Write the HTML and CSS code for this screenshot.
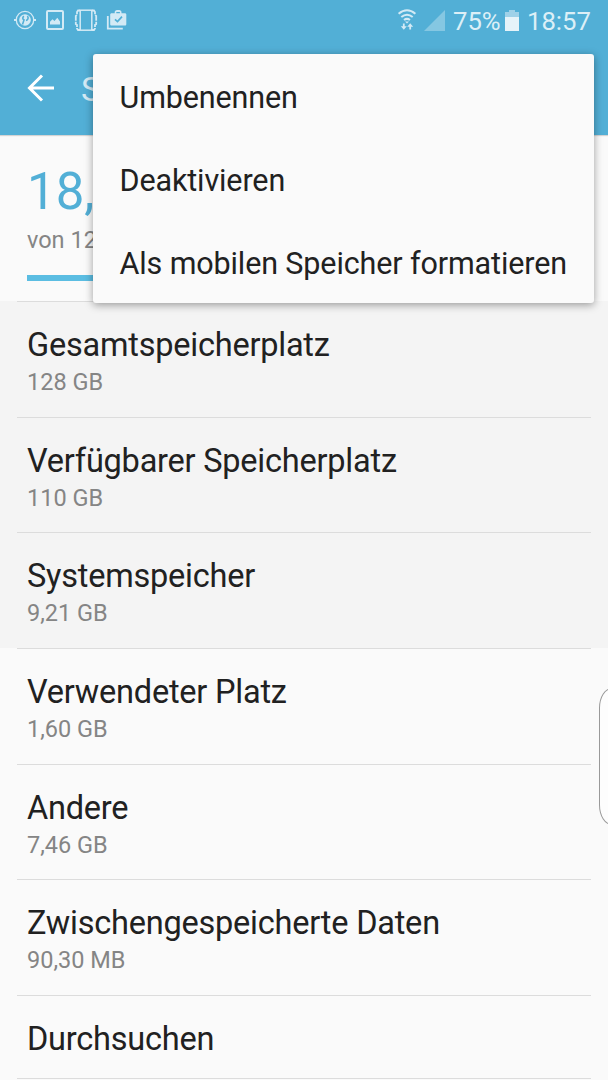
FILE: index.html
```
<!DOCTYPE html>
<html lang="de">
<head>
    <meta charset="UTF-8">
    <meta name="viewport" content="width=device-width, initial-scale=1.0">
    <title>Speicher</title>
    <link rel="stylesheet" href="styles.css">
</head>
<body>
<div class="screen">
    <header class="top">
        <div class="statusbar">
            <div class="status-left">
                <svg class="icon" width="24" height="24" viewBox="0 0 24 24" fill="none" stroke="currentColor">
                    <circle cx="12" cy="12" r="8.700" stroke-width="1.300"/>
                    <path d="M1 12h3M20 12h3" stroke-width="2.200"/>
                    <circle cx="12" cy="12" r="5.800" fill="currentColor" stroke="none"/>
                    <path d="M9.500 16.500l1.500-4.500c-1.800-1-1.500-3 0-3.800M14.300 8.200c1.700 1.600.6 4-1.300 4.300" stroke="#52afd6" stroke-width="1.600"/>
                </svg>
                <svg class="icon" width="20" height="22" viewBox="0 0 20 22">
                    <rect x="2" y="2" width="16" height="18" rx="1" fill="none" stroke="currentColor" stroke-width="2"/>
                    <path d="M5 15.500v-2.700l2.500-2.600 2 1.800 2.800-3.300 2.700 3.800v3z" fill="currentColor"/>
                </svg>
                <svg class="icon" width="24" height="24" viewBox="0 0 24 24" fill="none" stroke="currentColor">
                    <rect x="6.200" y="2.200" width="11.600" height="20" stroke-width="1.500"/>
                    <path d="M6 2.500H4L3 4v3L1.800 8v8L3 17v3.500l1 1.500h2M18 2.500h2L21 4v3l1.200 1v8L21 17v3.500L20 22h-2" stroke-width="1.800" stroke-dasharray="6 1"/>
                </svg>
                <svg class="icon" width="22" height="22" viewBox="0 0 22 22">
                    <path d="M1.800 7v12.700h15" fill="none" stroke="currentColor" stroke-width="1.800"/>
                    <path fill="currentColor" fill-rule="evenodd" d="M5.700 4.200h3v-.8c0-1.400 1-2.300 2.300-2.300h2.200c1.300 0 2.300.9 2.300 2.300v.8h3.300c1 0 1.500.5 1.500 1.500v9.200c0 1-.5 1.500-1.500 1.500H5.700c-1 0-1.500-.5-1.500-1.500V5.700c0-1 .5-1.500 1.500-1.500zM10.300 4.200h3.600V3h-3.600z"/>
                    <path d="M9 10.300l2.500 2.300 4.500-5" fill="none" stroke="#52afd6" stroke-width="1.700"/>
                </svg>
            </div>
            <div class="status-right">
                <svg class="icon wifi" width="20" height="24" viewBox="0 0 20 24" fill="none" stroke="currentColor" stroke-width="2">
                    <path d="M1.600 5.800q8.400-7 16.800 0M4.300 9q5.700-4.600 11.400 0M7 12q3-2.300 6 0"/>
                    <path d="M8 13.500h4l-2 2z" fill="currentColor" stroke="none"/>
                    <path d="M6.800 15.500v4M13.200 21.500v-4" stroke-width="1.800"/>
                    <path d="M3.800 18.200h6l-3 3.500zM10.200 18.800h6l-3-3.500z" fill="currentColor" stroke="none"/>
                </svg>
                <svg class="signal" width="21" height="21" viewBox="0 0 21 21"><path d="M21 0v21H0z" fill="currentColor"/></svg>
                <span class="percent">75%</span>
                <svg class="battery" width="14" height="21" viewBox="0 0 14 21">
                    <path d="M4 0h6v2h4v5H0V2h4z" fill="#9fd1e8"/>
                    <path d="M0 7h14v14H0z" fill="#e6f3f9"/>
                </svg>
                <span class="clock">18:57</span>
            </div>
        </div>
        <div class="toolbar">
            <svg class="back" width="28" height="28" viewBox="0 0 28 28" fill="none" stroke="#fff" stroke-width="3">
                <path d="M15 1.500L2.500 14 15 26.500M2.500 14H27"/>
            </svg>
            <span class="title">S</span>
        </div>
    </header>

    <section class="summary">
        <div class="used">18,</div>
        <div class="total">von 12</div>
        <div class="bar"></div>
    </section>

    <ul class="list">
        <li class="row disabled"><div class="inner"><div class="name">Gesamtspeicherplatz</div><div class="size">128 GB</div></div></li>
        <li class="row disabled"><div class="inner"><div class="name">Verfügbarer Speicherplatz</div><div class="size">110 GB</div></div></li>
        <li class="row disabled"><div class="inner"><div class="name">Systemspeicher</div><div class="size">9,21 GB</div></div></li>
        <li class="row"><div class="inner"><div class="name">Verwendeter Platz</div><div class="size">1,60 GB</div></div></li>
        <li class="row"><div class="inner"><div class="name">Andere</div><div class="size">7,46 GB</div></div></li>
        <li class="row"><div class="inner"><div class="name">Zwischengespeicherte Daten</div><div class="size">90,30 MB</div></div></li>
        <li class="row single"><div class="inner"><div class="name">Durchsuchen</div></div></li>
    </ul>

    <div class="menu">
        <div class="menu-item">Umbenennen</div>
        <div class="menu-item">Deaktivieren</div>
        <div class="menu-item">Als mobilen Speicher formatieren</div>
    </div>
    <div class="edge-handle"></div>
</div>
</body>
</html>
```
FILE: styles.css
```
* {
    box-sizing: border-box;
}
body {
    margin: 0;
    background: #fafafa;
    font-family: Roboto, sans-serif;
    color: #212121;
}
.screen {
    position: relative;
    width: 608px;
    height: 1080px;
    overflow: hidden;
}
.top {
    height: 135px;
    background: #52afd6;
    box-shadow: 0 1px 1px rgba(0, 0, 0, 0.15);
}
.statusbar {
    display: flex;
    justify-content: space-between;
    height: 40px;
    padding: 0 17px 0 13px;
    color: #d3eaf5;
}
.status-left,
.status-right {
    display: flex;
    align-items: center;
}
.status-left {
    gap: 8.3px;
}
.signal {
    margin: 0 8px 0 7px;
    color: #85c7e2;
}
.percent,
.clock {
    padding-top: 1px;
    font-size: 25.7px;
    line-height: 40px;
    color: #dceff7;
    white-space: nowrap;
}
.percent {
    width: 47px;
}
.battery {
    margin: 0 8px 0 5px;
}
.clock {
    width: 64px;
}
.toolbar {
    display: flex;
    align-items: center;
    height: 95px;
    padding-left: 27px;
}
.title {
    margin-left: 26px;
    padding-top: 2px;
    font-size: 34px;
    line-height: 40px;
    color: #d3eaf5;
}
.summary {
    height: 166px;
    padding: 26px 27px 0;
}
.used {
    font-size: 51px;
    line-height: 62px;
    color: #52afd6;
}
.total {
    margin-top: 3px;
    font-size: 23.5px;
    line-height: 28px;
    color: #858585;
}
.bar {
    width: 300px;
    height: 6px;
    margin-top: 21px;
    background: #5bbde2;
}
.list {
    margin: 0;
    padding: 0;
    list-style: none;
}
.row {
    height: 115.65px;
    padding: 0 17px;
}
.disabled {
    background: #f4f4f4;
}
.inner {
    height: 100%;
    padding: 23px 10px 0;
    border-top: 1px solid #dcdcdc;
}
.name {
    font-size: 32.5px;
    line-height: 41px;
    letter-spacing: -0.22px;
    white-space: nowrap;
}
.size {
    margin-top: 2px;
    font-size: 23.5px;
    line-height: 28px;
    color: #858585;
}
.single {
    height: 84px;
}
.single .inner {
    border-bottom: 1px solid #dcdcdc;
}
.menu {
    position: absolute;
    top: 54px;
    left: 93px;
    width: 501px;
    height: 249px;
    padding: 2px 0 0 26.5px;
    background: #fafafa;
    border-radius: 3px;
    box-shadow: 0 2px 8px rgba(0, 0, 0, 0.38);
}
.menu-item {
    font-size: 30.5px;
    line-height: 83px;
    letter-spacing: -0.12px;
    white-space: nowrap;
}
.edge-handle {
    position: absolute;
    top: 688px;
    right: -20px;
    width: 29px;
    height: 137px;
    background: #fdfdfd;
    border: 1px solid #999;
    border-radius: 13px / 20px;
}
```
